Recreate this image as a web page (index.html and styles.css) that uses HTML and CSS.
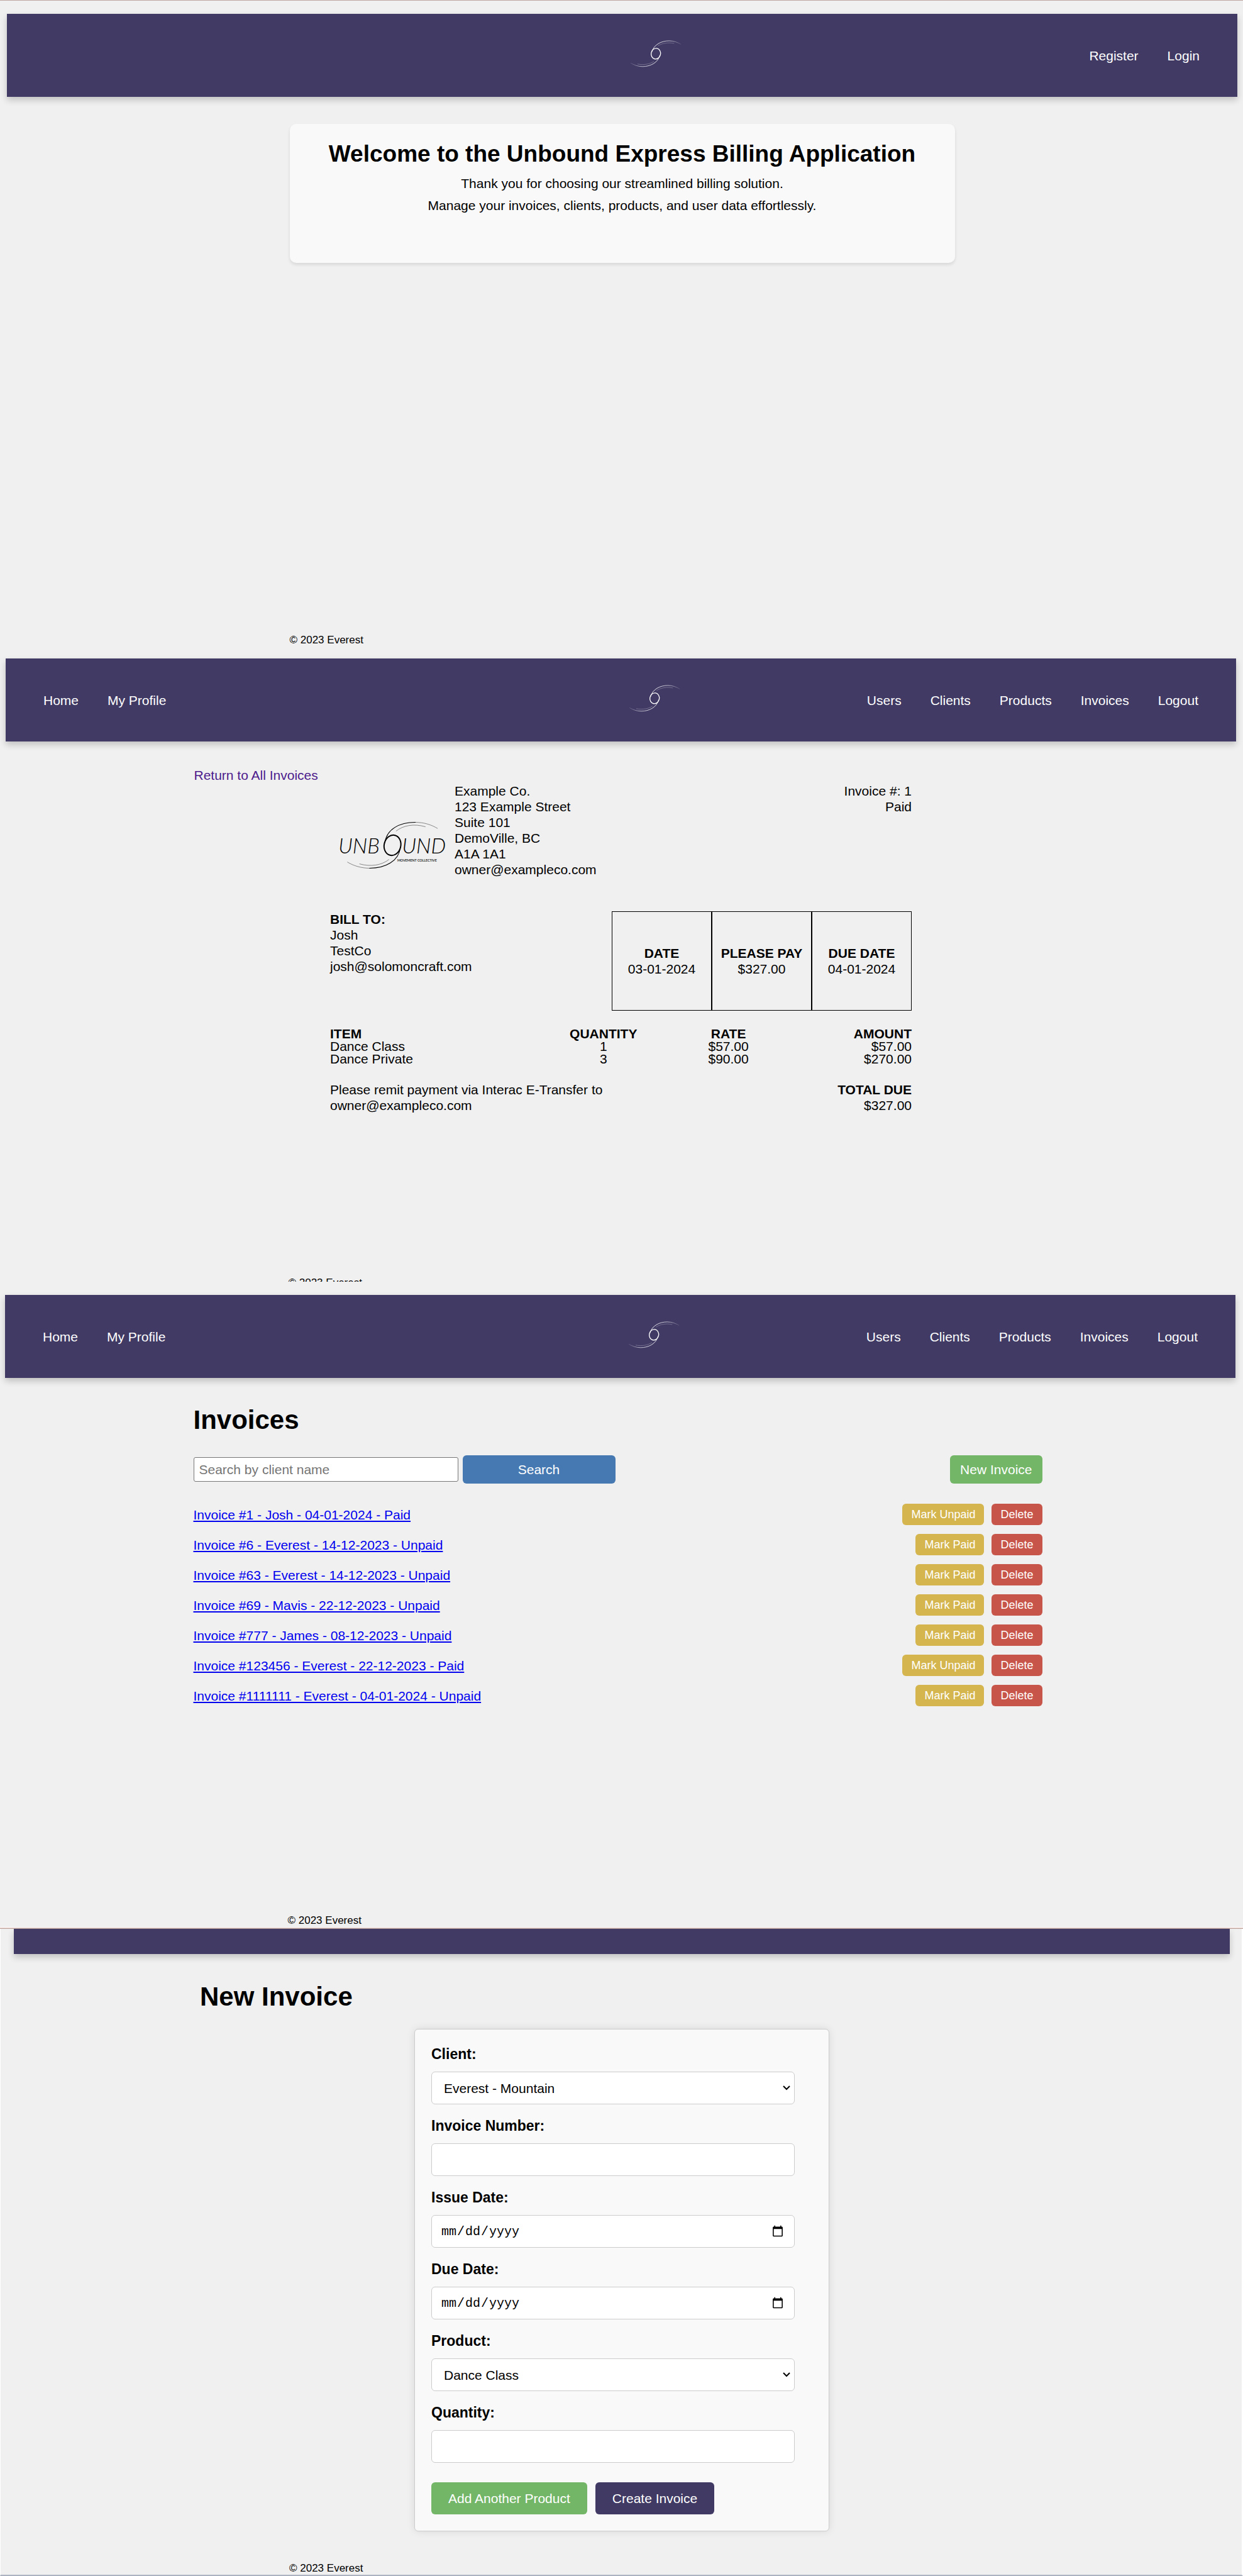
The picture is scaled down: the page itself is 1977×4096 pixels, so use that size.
FILE: index.html
```html
<!DOCTYPE html>
<html lang="en">
<head>
<meta charset="utf-8">
<meta name="viewport" content="width=device-width, initial-scale=1">
<title>Unbound Express Billing</title>
<link rel="stylesheet" href="styles.css">
</head>
<body>
<svg class="defs" aria-hidden="true">
  <defs>
    <linearGradient id="fade" gradientUnits="userSpaceOnUse" x1="270" y1="0" x2="480" y2="0">
      <stop offset="0" stop-color="#fff"/>
      <stop offset="0.6" stop-color="#fff" stop-opacity="0.7"/>
      <stop offset="1" stop-color="#fff" stop-opacity="0.1"/>
    </linearGradient>
    <g id="arm" fill="none" stroke-linecap="round">
      <path d="M265 138C278 84 335 57 390 57C424 57 452 68 475 82" stroke="url(#fade)" stroke-width="4"/>
      <path d="M310 93C336 75 382 66 425 75" stroke="#fff" stroke-opacity="0.4" stroke-width="3"/>
    </g>
    <symbol id="swirl" viewBox="0 0 290 100">
      <g transform="translate(127.5 -4) scale(.3333)">
        <ellipse cx="294" cy="150" rx="34" ry="39" transform="rotate(12 294 150)" fill="none" stroke="#fff" stroke-width="6"/>
        <use href="#arm"/>
        <use href="#arm" transform="rotate(180 294 150)"/>
      </g>
    </symbol>
  </defs>
</svg>

<section class="screen screen-home">
  <nav class="nav">
    <div class="nav-links"></div>
    <svg class="nav-logo" role="img" aria-label="Unbound"><use href="#swirl"/></svg>
    <div class="nav-links nav-right"><a href="#register">Register</a><a href="#login">Login</a></div>
  </nav>
  <main class="welcome">
    <h1>Welcome to the Unbound Express Billing Application</h1>
    <p>Thank you for choosing our streamlined billing solution.</p>
    <p>Manage your invoices, clients, products, and user data effortlessly.</p>
  </main>
  <footer class="footer">© 2023 Everest</footer>
</section>

<section class="screen screen-invoice">
  <nav class="nav">
    <div class="nav-links"><a href="#home">Home</a><a href="#profile">My Profile</a></div>
    <svg class="nav-logo" role="img" aria-label="Unbound"><use href="#swirl"/></svg>
    <div class="nav-links nav-right"><a href="#users">Users</a><a href="#clients">Clients</a><a href="#products">Products</a><a href="#invoices">Invoices</a><a href="#logout">Logout</a></div>
  </nav>
  <main class="content">
    <a class="back" href="#invoices">Return to All Invoices</a>
    <article class="invoice">
      <header class="invoice-head">
        <svg class="brand" viewBox="12 -198 900 900" role="img" aria-label="Unbound Movement Collective">
          <g fill="none" stroke="#000" stroke-linecap="round">
            <ellipse cx="463" cy="252" rx="60" ry="74" transform="rotate(14 463 252)" stroke-width="9"/>
            <path d="M408 235C420 135 515 86 628 86" stroke-width="5"/>
            <path d="M628 86C690 86 745 104 788 130" stroke-width="2"/>
            <path d="M490 149C540 108 620 94 700 118" stroke-width="2"/>
            <path d="M520 270C508 365 415 418 298 418" stroke-width="5"/>
            <path d="M298 418C238 418 180 400 138 374" stroke-width="2"/>
            <path d="M436 356C386 396 306 410 226 387" stroke-width="2"/>
          </g>
          <text class="brand-name" x="72" y="312">UNB</text>
          <text class="brand-name" x="532" y="312">UND</text>
          <text class="brand-tag" x="498" y="371">MOVEMENT COLLECTIVE</text>
        </svg>
        <address>Example Co.<br>123 Example Street<br>Suite 101<br>DemoVille, BC<br>A1A 1A1<br>owner@exampleco.com</address>
        <p class="status">Invoice #: 1<br>Paid</p>
      </header>
      <div class="billing">
        <p><strong>BILL TO:</strong><br>Josh<br>TestCo<br>josh@solomoncraft.com</p>
        <dl class="boxes">
          <div><dt>DATE</dt><dd>03-01-2024</dd></div>
          <div><dt>PLEASE PAY</dt><dd>$327.00</dd></div>
          <div><dt>DUE DATE</dt><dd>04-01-2024</dd></div>
        </dl>
      </div>
      <table class="items">
        <thead><tr><th>ITEM</th><th>QUANTITY</th><th>RATE</th><th>AMOUNT</th></tr></thead>
        <tbody>
          <tr><td>Dance Class</td><td>1</td><td>$57.00</td><td>$57.00</td></tr>
          <tr><td>Dance Private</td><td>3</td><td>$90.00</td><td>$270.00</td></tr>
        </tbody>
      </table>
      <div class="total">
        <p>Please remit payment via Interac E-Transfer to<br>owner@exampleco.com</p>
        <p class="amount"><strong>TOTAL DUE</strong><br>$327.00</p>
      </div>
    </article>
  </main>
  <footer class="footer">© 2023 Everest</footer>
</section>

<section class="screen screen-list">
  <nav class="nav">
    <div class="nav-links"><a href="#home">Home</a><a href="#profile">My Profile</a></div>
    <svg class="nav-logo" role="img" aria-label="Unbound"><use href="#swirl"/></svg>
    <div class="nav-links nav-right"><a href="#users">Users</a><a href="#clients">Clients</a><a href="#products">Products</a><a href="#invoices">Invoices</a><a href="#logout">Logout</a></div>
  </nav>
  <main class="content">
    <h1 class="title">Invoices</h1>
    <form class="toolbar">
      <input class="search" type="text" placeholder="Search by client name" aria-label="Search by client name">
      <button class="btn btn-blue" type="button">Search</button>
      <button class="btn btn-green" type="button">New Invoice</button>
    </form>
    <ul class="list">
      <li><a href="#1">Invoice #1 - Josh - 04-01-2024 - Paid</a><button class="small mark" type="button">Mark Unpaid</button><button class="small delete" type="button">Delete</button></li>
      <li><a href="#6">Invoice #6 - Everest - 14-12-2023 - Unpaid</a><button class="small mark" type="button">Mark Paid</button><button class="small delete" type="button">Delete</button></li>
      <li><a href="#63">Invoice #63 - Everest - 14-12-2023 - Unpaid</a><button class="small mark" type="button">Mark Paid</button><button class="small delete" type="button">Delete</button></li>
      <li><a href="#69">Invoice #69 - Mavis - 22-12-2023 - Unpaid</a><button class="small mark" type="button">Mark Paid</button><button class="small delete" type="button">Delete</button></li>
      <li><a href="#777">Invoice #777 - James - 08-12-2023 - Unpaid</a><button class="small mark" type="button">Mark Paid</button><button class="small delete" type="button">Delete</button></li>
      <li><a href="#123456">Invoice #123456 - Everest - 22-12-2023 - Paid</a><button class="small mark" type="button">Mark Unpaid</button><button class="small delete" type="button">Delete</button></li>
      <li><a href="#1111111">Invoice #1111111 - Everest - 04-01-2024 - Unpaid</a><button class="small mark" type="button">Mark Paid</button><button class="small delete" type="button">Delete</button></li>
    </ul>
  </main>
  <footer class="footer">© 2023 Everest</footer>
</section>

<div class="divider"></div>
<section class="screen screen-new">
  <nav class="nav nav-strip"></nav>
  <main class="content">
    <h1 class="title">New Invoice</h1>
    <form class="card">
      <label for="client">Client:</label>
      <select class="field" id="client"><option>Everest - Mountain</option></select>
      <label for="number">Invoice Number:</label>
      <input class="field" id="number" type="text">
      <label for="issue">Issue Date:</label>
      <input class="field" id="issue" type="date">
      <label for="due">Due Date:</label>
      <input class="field" id="due" type="date">
      <label for="product">Product:</label>
      <select class="field" id="product"><option>Dance Class</option></select>
      <label for="quantity">Quantity:</label>
      <input class="field" id="quantity" type="text">
      <div class="actions">
        <button class="btn btn-green" type="button">Add Another Product</button>
        <button class="btn btn-purple" type="button">Create Invoice</button>
      </div>
    </form>
  </main>
  <footer class="footer">© 2023 Everest</footer>
</section>
</body>
</html>
```
FILE: styles.css
```css
* { box-sizing: border-box; }

body {
  margin: 0;
  background: #f0f0f0;
  color: #000;
  font: 21px/25px "Liberation Sans", Arial, sans-serif;
}

h1, p, ul, dl, dd { margin: 0; padding: 0; }
button, input, select { font: inherit; color: inherit; }

.defs { position: absolute; width: 0; height: 0; }

/* Screens */
.screen { display: flex; flex-direction: column; }
.screen-home { min-height: 1037px; padding: 21px 9px 9px 11px; border-top: 1px solid #bfa8a2; }
.screen-invoice { height: 1001px; padding: 10px 11px 0 9px; overflow: hidden; }
.screen-list { min-height: 1026px; padding: 21px 12px 0 8px; }
.screen-new {
  min-height: 1029px;
  padding: 0 19px 0 21px;
  border: solid #fff;
  border-width: 0 2px 0 1px;
  border-bottom: 2px solid #acb2bf;
}
.divider { height: 3px; background: linear-gradient(#fff 1px, #e6cac5 1px 2px, #bfa8a2 2px); }

/* Navigation */
.nav {
  display: grid;
  grid-template-columns: 1fr auto 1fr;
  align-items: center;
  flex: none;
  height: 132px;
  padding: 0 60px;
  background: #403a64;
  box-shadow: 0 5px 10px rgba(0, 0, 0, 0.2);
}
.nav-strip { height: 40px; }
.nav-logo { width: 192px; height: 66px; }
.nav-links { display: flex; gap: 46px; }
.nav-right { justify-content: flex-end; }
.nav a { color: #fff; text-decoration: none; }

.footer {
  width: 100%;
  max-width: 1058px;
  margin: auto auto 0;
  font-size: 17px;
  line-height: 20px;
}
.screen-invoice .footer { flex: none; margin-bottom: -12px; }

/* Welcome */
.welcome {
  width: 100%;
  max-width: 1058px;
  margin: 43px auto 0;
  padding: 27px 24px 79px;
  border-radius: 10px;
  background: #f9f9f9;
  box-shadow: 0 3px 5px rgba(0, 0, 0, 0.1);
  text-align: center;
}
.welcome h1 { font-size: 37px; line-height: 42px; }
.welcome p { margin-top: 10px; }
.welcome h1 + p { margin-top: 13px; }

.content { width: 100%; max-width: 1358px; margin: 43px auto 0; }

/* Invoice */
.screen-invoice .content { margin-top: 41px; }
.back { display: block; color: #4c1b8c; text-decoration: none; }
.invoice { max-width: 925px; margin: 0 auto; }
.invoice-head { display: flex; }
.brand { width: 198px; height: 198px; flex: none; }
.brand-name { font: italic 300 152px Lato, "Liberation Sans", sans-serif; }
.brand-tag { font: 600 24px Lato, sans-serif; }
address { font-style: normal; }
.status { margin-left: auto; text-align: right; }
.billing { display: flex; justify-content: space-between; margin-top: 6px; }
.boxes { display: grid; grid-template-columns: repeat(3, 159px); height: 158px; }
.boxes div {
  display: flex;
  flex-direction: column;
  justify-content: center;
  border: 1px solid #000;
  text-align: center;
}
.boxes dt { font-weight: bold; }
.items {
  width: 100%;
  margin-top: 27px;
  border-collapse: collapse;
  table-layout: fixed;
  line-height: 20px;
  text-align: center;
}
.items th, .items td { padding: 0; }
.items th:nth-child(1) { width: 36%; }
.items th:nth-child(2) { width: 22%; }
.items th:nth-child(3) { width: 21%; }
.items tr > :first-child { text-align: left; }
.items tr > :last-child { text-align: right; }
.total { display: flex; justify-content: space-between; margin-top: 26px; }
.amount { text-align: right; }

/* Invoice list */
.title { font-size: 42px; line-height: 48px; }
.screen-list .content { padding-right: 8px; }
.toolbar { display: flex; align-items: center; gap: 7px; margin-top: 32px; }
.search {
  width: 421px;
  height: 39px;
  padding: 0 8px;
  border: 1px solid #767676;
  border-radius: 3px;
  background: #fff;
}
.search::placeholder { color: #757575; }
.btn { height: 45px; padding: 0 22px; border: 0; border-radius: 6px; color: #fff; }
.btn-blue { width: 243px; background: #4679b2; }
.btn-green { background: #73b667; }
.btn-purple { background: #403a64; }
.toolbar .btn-green { margin-left: auto; padding: 0 16px; }
.list { display: grid; gap: 14px; margin-top: 32px; list-style: none; }
.list li { display: flex; align-items: center; gap: 12px; }
.list a { margin-right: auto; color: #00e; }
.small {
  height: 34px;
  padding: 0 14px;
  border: 0;
  border-radius: 6px;
  color: #fff;
  font-size: 18px;
}
.mark { background: #d4b54e; }
.delete { background: #c85549; }

/* New invoice form */
.screen-new .content { max-width: 1342px; margin-top: 44px; }
.card {
  max-width: 660px;
  margin: 27px auto 0;
  padding: 26px;
  border: 1px solid #ccc;
  border-radius: 6px;
  background: #f9f9f9;
  box-shadow: 0 0 13px rgba(0, 0, 0, 0.1);
}
.card label { display: block; font-size: 23px; font-weight: bold; line-height: 27px; }
.field {
  display: block;
  width: calc(100% - 28px);
  height: 52px;
  margin: 14px 0 21px;
  padding: 0 14px;
  border: 1px solid #ccc;
  border-radius: 6px;
  background: #fff;
}
.field[type="date"] { font-family: "Liberation Mono", monospace; font-size: 20px; }
select.field {
  padding: 0 19px;
  appearance: none;
  background: #fff url("data:image/svg+xml,%3Csvg xmlns='http://www.w3.org/2000/svg' width='12' height='8' fill='none' stroke='%23000' stroke-width='2'%3E%3Cpath d='M1 1l5 5 5-5'/%3E%3C/svg%3E") no-repeat right 6px center;
}
.actions { display: flex; gap: 13px; margin-top: 31px; }
.actions .btn { height: 51px; padding: 0 27px; }
```
